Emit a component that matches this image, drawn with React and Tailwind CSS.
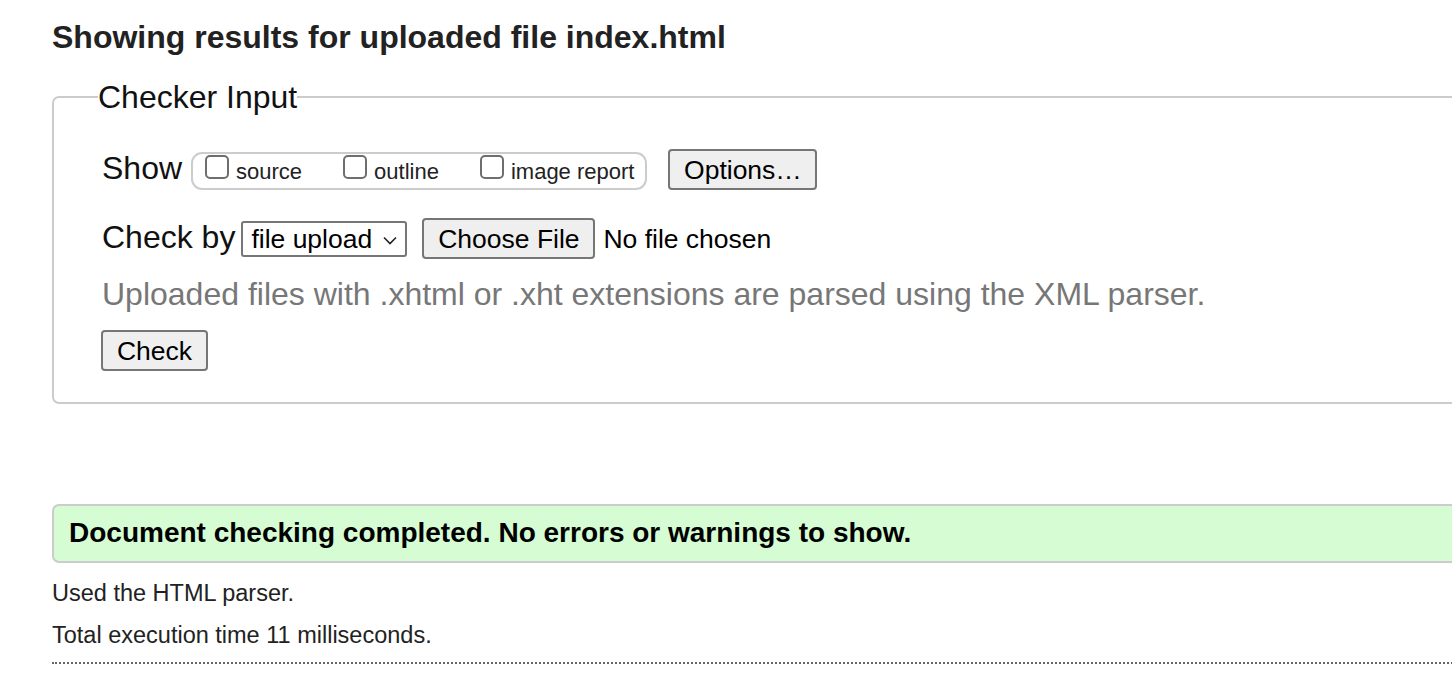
import React from 'react';

function Checkbox({ label }) {
  return (
    <label className="flex items-baseline gap-[7px]">
      <span className="inline-block w-6 h-6 border-2 border-[#6e6e6e] rounded-[5px] bg-white" />
      <span>{label}</span>
    </label>
  );
}

function Button({ children, className = '' }) {
  return (
    <button
      type="button"
      className={
        'h-[41px] px-[13px] border-2 border-[#767676] rounded-[4px] bg-[#efefef] text-[26.5px] leading-[30px] text-black ' +
        className
      }
    >
      {children}
    </button>
  );
}

export default function App() {
  return (
    <div className="w-full h-[696px] overflow-hidden bg-white font-['Liberation_Sans',Arial,sans-serif] text-[#222]">
      <div className="w-[1500px] pl-[52px]">
        <h2 className="pt-[17px] text-[32px] leading-[40px] font-bold text-[#222]">
          Showing results for uploaded file index.html
        </h2>

        {/* Checker input */}
        <fieldset className="mt-[22px] border-2 border-[#cccccc] rounded-[7px] pl-[48px] pt-[34px] pb-[31px]">
          <legend className="-ml-[4px] text-[32px] leading-[36px] text-[#111]">Checker Input</legend>

          <div className="flex items-baseline text-[32px] leading-[36px] text-[#111]">
            <span>Show</span>
            <div className="ml-[9px] h-[38px] flex items-baseline gap-[41px] pl-[12px] pr-[11px] pt-[1px] border-2 border-[#cccccc] rounded-[11px] text-[22px] leading-[30px] text-[#222]">
              <Checkbox label="source" />
              <Checkbox label="outline" />
              <Checkbox label="image report" />
            </div>
            <Button className="ml-[21px] w-[149px]">Options…</Button>
          </div>

          <div className="mt-[28px] flex items-baseline text-[32px] leading-[36px] text-[#111]">
            <span>Check by</span>
            <div className="ml-[6px] w-[166px] h-[36px] flex items-center justify-between pl-[8px] pr-[8px] border-2 border-[#767676] rounded-[3px] bg-white text-[26.5px] leading-[30px] text-black">
              <span>file upload</span>
              <svg width="14" height="9" viewBox="0 0 14 9" className="mt-[3px]">
                <polyline points="1,1.5 7,7.5 13,1.5" fill="none" stroke="#222" strokeWidth="1.6" />
              </svg>
            </div>
            <Button className="ml-[15px] w-[173px]">Choose File</Button>
            <span className="ml-[8px] text-[26.5px] text-black">No file chosen</span>
          </div>

          <p className="mt-[17px] text-[32px] leading-[36px] text-[#777]">
            Uploaded files with .xhtml or .xht extensions are parsed using the XML parser.
          </p>

          <div className="mt-[18px] -ml-[1px]">
            <Button className="w-[107px]">Check</Button>
          </div>
        </fieldset>

        <div className="mt-[100px] border-2 border-[#cccccc] rounded-[7px] bg-[#d5fcd3] pl-[15px] pt-[11px] pb-[12px]">
          <p className="text-[28px] leading-[32px] font-bold text-black">
            Document checking completed. No errors or warnings to show.
          </p>
        </div>

        <p className="mt-[16px] text-[23.5px] leading-[28px] text-[#222]">Used the HTML parser.</p>
        <p className="mt-[14px] text-[23.5px] leading-[28px] text-[#222]">Total execution time 11 milliseconds.</p>
        <div className="mt-[13px] border-t-2 border-dotted border-[#666]" />
      </div>
    </div>
  );
}
